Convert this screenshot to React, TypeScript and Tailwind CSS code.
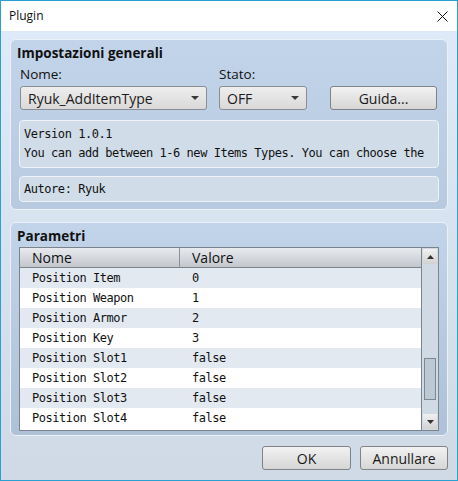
import React from 'react';

const rows = [
  ['Position Item', '0'],
  ['Position Weapon', '1'],
  ['Position Armor', '2'],
  ['Position Key', '3'],
  ['Position Slot1', 'false'],
  ['Position Slot2', 'false'],
  ['Position Slot3', 'false'],
  ['Position Slot4', 'false'],
];

const ui = { fontFamily: '"Open Sans", "Noto Sans", sans-serif' };
const mono = { fontFamily: '"DejaVu Sans Mono", monospace' };

function Caret() {
  return (
    <svg width="8" height="4" viewBox="0 0 8 4" className="block">
      <path d="M0 0 H8 L4 4 Z" fill="#3a3a3a" />
    </svg>
  );
}

function Select({ value, width }: { value: string; width: string }) {
  return (
    <div
      className={`${width} h-[24px] flex items-center justify-between pl-[7px] pr-[7px] rounded-[3px] border border-[#8a8d91] bg-gradient-to-b from-[#eeeeee] to-[#d9d9d9] text-[14px] text-[#1a1a1a]`}
    >
      <span>{value}</span>
      <Caret />
    </div>
  );
}

function Button({ label, width }: { label: string; width: string }) {
  return (
    <div
      className={`${width} h-[24px] flex items-center justify-center rounded-[3px] border border-[#7f8286] bg-gradient-to-b from-[#f2f2f2] to-[#d6d6d6] text-[14px] text-[#1a1a1a]`}
    >
      {label}
    </div>
  );
}

export default function App() {
  return (
    <div
      className="w-[458px] h-[481px] flex flex-col border border-[#2a9fd2] overflow-hidden"
      style={ui}
    >
      {/* title bar */}
      <div className="h-[30px] shrink-0 bg-white flex items-center justify-between pl-[8px] pr-[9px]">
        <span className="text-[12px] text-[#111]">Plugin</span>
        <svg width="11" height="11" viewBox="0 0 11 11">
          <path d="M0.5 0.5 L10.5 10.5 M10.5 0.5 L0.5 10.5" stroke="#111" strokeWidth="1" />
        </svg>
      </div>

      <div className="flex-1 bg-gradient-to-b from-[#dfeaf8] to-[#cfdae6] px-[9px] pt-[8px]">
        {/* general settings */}
        <div className="h-[171px] rounded-[6px] border border-[#eaf1f9] bg-gradient-to-b from-[#c2d4e9] to-[#b8cadf] px-[8px] pt-[5px]">
          <div className="h-[16px] text-[13.5px] font-bold leading-[16px] text-[#111] -ml-[2px]">
            Impostazioni generali
          </div>
          <div className="mt-[5px] flex h-[16px] text-[13.5px] leading-[16px] text-[#111] pl-[1px]">
            <span className="w-[199px]">Nome:</span>
            <span>Stato:</span>
          </div>
          <div className="mt-[4px] flex items-center pl-[1px]">
            <Select value="Ryuk_AddItemType" width="w-[187px]" />
            <div className="w-[12px]" />
            <Select value="OFF" width="w-[88px]" />
            <div className="w-[23px]" />
            <Button label="Guida..." width="w-[107px]" />
          </div>
          <div
            className="mt-[10px] h-[48px] rounded-[4px] border border-[#edf3f9] bg-[#d0dce8] px-[4px] pt-[4px] text-[12px] tracking-[-0.45px] leading-[19px] text-[#111] whitespace-nowrap overflow-hidden"
            style={mono}
          >
            <div>Version 1.0.1</div>
            <div>You can add between 1-6 new Items Types. You can choose the</div>
          </div>
          <div
            className="mt-[8px] h-[26px] rounded-[4px] border border-[#edf3f9] bg-[#d0dce8] px-[4px] flex items-center text-[12px] tracking-[-0.45px] text-[#111]"
            style={mono}
          >
            Autore: Ryuk
          </div>
        </div>

        {/* parameters */}
        <div className="mt-[12px] h-[214px] rounded-[6px] border border-[#eaf1f9] bg-gradient-to-b from-[#c2d4e9] to-[#afc1d6] px-[8px] pt-[5px]">
          <div className="h-[16px] text-[13.5px] font-bold leading-[16px] text-[#111] -ml-[2px]">
            Parametri
          </div>
          <div className="mt-[3px] h-[184px] w-[420px] border border-[#7b848d] flex bg-white">
            <div className="flex-1 flex flex-col">
              <div className="h-[20px] shrink-0 flex border-b border-[#7b848d] bg-gradient-to-b from-[#e8eaee] to-[#c3c7cc] text-[14px] text-[#111]">
                <div className="w-[160px] pl-[12px] flex items-center border-r border-[#8a9097]">Nome</div>
                <div className="pl-[12px] flex items-center">Valore</div>
              </div>
              {rows.map(([name, value], i) => (
                <div
                  key={name}
                  className={`h-[20px] flex items-center text-[12px] tracking-[-0.45px] text-[#111] ${i % 2 === 0 ? 'bg-[#e2e9f1]' : 'bg-white'}`}
                  style={mono}
                >
                  <div className="w-[160px] pl-[12px]">{name}</div>
                  <div className="pl-[12px]">{value}</div>
                </div>
              ))}
            </div>
            {/* scrollbar */}
            <div className="w-[17px] border-l border-[#7b848d] bg-[#cfdae5] flex flex-col items-center py-[1px]">
              <div className="w-[14px] h-[15px] bg-gradient-to-b from-[#f0f0f0] to-[#d2d2d2] flex items-center justify-center">
                <svg width="7" height="4" viewBox="0 0 7 4">
                  <path d="M0 4 H7 L3.5 0 Z" fill="#333" />
                </svg>
              </div>
              <div className="flex-1 w-full" />
              <div className="w-[12px] h-[42px] border border-[#7d8790] bg-[#bcc8d3]" />
              <div className="h-[14px]" />
              <div className="w-[14px] h-[15px] bg-gradient-to-b from-[#f0f0f0] to-[#d2d2d2] flex items-center justify-center">
                <svg width="7" height="4" viewBox="0 0 7 4">
                  <path d="M0 0 H7 L3.5 4 Z" fill="#333" />
                </svg>
              </div>
            </div>
          </div>
        </div>

        {/* buttons */}
        <div className="mt-[10px] flex justify-end gap-[9px]">
          <Button label="OK" width="w-[89px]" />
          <Button label="Annullare" width="w-[88px]" />
        </div>
      </div>
    </div>
  );
}
